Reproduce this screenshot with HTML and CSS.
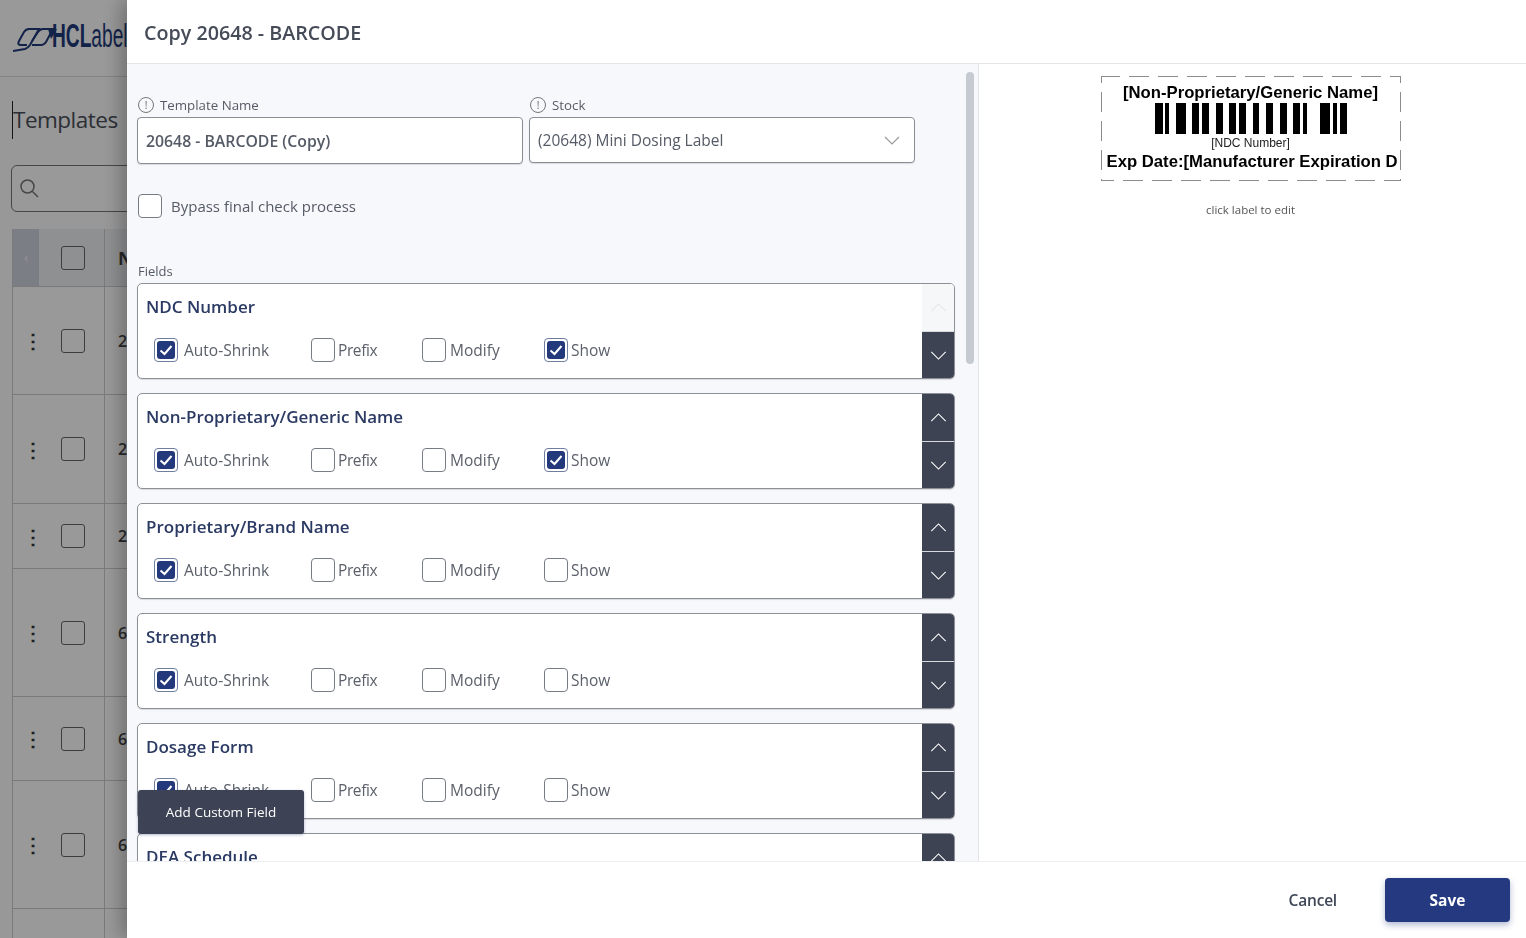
FILE: index.html
```html
<!DOCTYPE html>
<html lang="en">
<head>
<meta charset="utf-8">
<title>Copy 20648 - BARCODE</title>
<link rel="stylesheet" href="styles.css">
</head>
<body>
<div class="page">
  <header class="topbar">
    <svg class="logo-mark" width="44" height="25" viewBox="0 0 44 25" fill="none" stroke="#1f3a7a" stroke-width="2">
      <path d="M0 24L12 22Q15 21 17 18L26 2H16Q13 2 11 5L6 14Q4 18 8 18H14"/>
      <path d="M19 18H28Q31 18 33 15L40 2H30Q27 2 25 5L19 14"/>
      <path d="M35 2H44L38 12Z" fill="#1f3a7a" stroke="none"/>
    </svg>
    <span class="logo-text"><b>HCL</b>abels</span>
  </header>
  <h1 class="page-title">Templates</h1>
  <div class="search">
    <svg width="22" height="22" viewBox="0 0 22 22" fill="none" stroke="#777" stroke-width="1.5"><circle cx="9.500" cy="9.500" r="6.500"/><path d="M14.500 14.500L20 20"/></svg>
  </div>
  <div class="table">
    <div class="row head"><div class="toggle">‹</div><div class="sel"><span class="box"></span></div><div class="cell">Name</div></div>
    <div class="row h108"><div class="dots">⋮</div><div class="sel"><span class="box"></span></div><div class="cell">20648</div></div>
    <div class="row h109"><div class="dots">⋮</div><div class="sel"><span class="box"></span></div><div class="cell">20649</div></div>
    <div class="row h65"><div class="dots">⋮</div><div class="sel"><span class="box"></span></div><div class="cell">20650</div></div>
    <div class="row h128"><div class="dots">⋮</div><div class="sel"><span class="box"></span></div><div class="cell">60001</div></div>
    <div class="row h84"><div class="dots">⋮</div><div class="sel"><span class="box"></span></div><div class="cell">60002</div></div>
    <div class="row h128"><div class="dots">⋮</div><div class="sel"><span class="box"></span></div><div class="cell">60003</div></div>
    <div class="row h65"><div class="dots"></div><div class="sel"></div></div>
  </div>
</div>

<div class="scrim"></div>

<aside class="drawer">
  <header class="drawer-head">Copy 20648 - BARCODE</header>
  <div class="drawer-body">
    <section class="form-pane">
      <div class="top-fields">
        <div class="field name-field">
          <label class="field-label"><span class="info">!</span>Template Name</label>
          <div class="input strong">20648 - BARCODE (Copy)</div>
        </div>
        <div class="field stock-field">
          <label class="field-label"><span class="info">!</span>Stock</label>
          <div class="input select">(20648) Mini Dosing Label
            <svg width="16" height="9" viewBox="0 0 16 9" fill="none" stroke="#999" stroke-width="1.2"><path d="M1 1L8 8L15 1"/></svg>
          </div>
        </div>
      </div>
      <div class="bypass"><span class="check"></span>Bypass final check process</div>
      <div class="fields-label">Fields</div>
      <div class="cards">
        <article class="card">
          <div class="card-main">
            <h2>NDC Number</h2>
            <div class="opts">
              <div class="opt o1"><span class="check on"><svg viewBox="0 0 18 18"><path d="M3.500 9.500L7.500 13L14.500 5"/></svg></span>Auto-Shrink</div>
              <div class="opt o2"><span class="check"></span>Prefix</div>
              <div class="opt o3"><span class="check"></span>Modify</div>
              <div class="opt o4"><span class="check on"><svg viewBox="0 0 18 18"><path d="M3.500 9.500L7.500 13L14.500 5"/></svg></span>Show</div>
            </div>
          </div>
          <div class="arrows">
            <button class="arrow off"><svg viewBox="0 0 18 10"><path d="M1 9L9 1L17 9"/></svg></button>
            <button class="arrow"><svg viewBox="0 0 18 10"><path d="M1 1L9 9L17 1"/></svg></button>
          </div>
        </article>
        <article class="card">
          <div class="card-main">
            <h2>Non-Proprietary/Generic Name</h2>
            <div class="opts">
              <div class="opt o1"><span class="check on"><svg viewBox="0 0 18 18"><path d="M3.500 9.500L7.500 13L14.500 5"/></svg></span>Auto-Shrink</div>
              <div class="opt o2"><span class="check"></span>Prefix</div>
              <div class="opt o3"><span class="check"></span>Modify</div>
              <div class="opt o4"><span class="check on"><svg viewBox="0 0 18 18"><path d="M3.500 9.500L7.500 13L14.500 5"/></svg></span>Show</div>
            </div>
          </div>
          <div class="arrows">
            <button class="arrow"><svg viewBox="0 0 18 10"><path d="M1 9L9 1L17 9"/></svg></button>
            <button class="arrow"><svg viewBox="0 0 18 10"><path d="M1 1L9 9L17 1"/></svg></button>
          </div>
        </article>
        <article class="card">
          <div class="card-main">
            <h2>Proprietary/Brand Name</h2>
            <div class="opts">
              <div class="opt o1"><span class="check on"><svg viewBox="0 0 18 18"><path d="M3.500 9.500L7.500 13L14.500 5"/></svg></span>Auto-Shrink</div>
              <div class="opt o2"><span class="check"></span>Prefix</div>
              <div class="opt o3"><span class="check"></span>Modify</div>
              <div class="opt o4"><span class="check"></span>Show</div>
            </div>
          </div>
          <div class="arrows">
            <button class="arrow"><svg viewBox="0 0 18 10"><path d="M1 9L9 1L17 9"/></svg></button>
            <button class="arrow"><svg viewBox="0 0 18 10"><path d="M1 1L9 9L17 1"/></svg></button>
          </div>
        </article>
        <article class="card">
          <div class="card-main">
            <h2>Strength</h2>
            <div class="opts">
              <div class="opt o1"><span class="check on"><svg viewBox="0 0 18 18"><path d="M3.500 9.500L7.500 13L14.500 5"/></svg></span>Auto-Shrink</div>
              <div class="opt o2"><span class="check"></span>Prefix</div>
              <div class="opt o3"><span class="check"></span>Modify</div>
              <div class="opt o4"><span class="check"></span>Show</div>
            </div>
          </div>
          <div class="arrows">
            <button class="arrow"><svg viewBox="0 0 18 10"><path d="M1 9L9 1L17 9"/></svg></button>
            <button class="arrow"><svg viewBox="0 0 18 10"><path d="M1 1L9 9L17 1"/></svg></button>
          </div>
        </article>
        <article class="card">
          <div class="card-main">
            <h2>Dosage Form</h2>
            <div class="opts">
              <div class="opt o1"><span class="check on"><svg viewBox="0 0 18 18"><path d="M3.500 9.500L7.500 13L14.500 5"/></svg></span>Auto-Shrink</div>
              <div class="opt o2"><span class="check"></span>Prefix</div>
              <div class="opt o3"><span class="check"></span>Modify</div>
              <div class="opt o4"><span class="check"></span>Show</div>
            </div>
          </div>
          <div class="arrows">
            <button class="arrow"><svg viewBox="0 0 18 10"><path d="M1 9L9 1L17 9"/></svg></button>
            <button class="arrow"><svg viewBox="0 0 18 10"><path d="M1 1L9 9L17 1"/></svg></button>
          </div>
        </article>
        <article class="card">
          <div class="card-main">
            <h2>DEA Schedule</h2>
          </div>
          <div class="arrows">
            <button class="arrow"><svg viewBox="0 0 18 10"><path d="M1 9L9 1L17 9"/></svg></button>
            <button class="arrow"><svg viewBox="0 0 18 10"><path d="M1 1L9 9L17 1"/></svg></button>
          </div>
        </article>
      </div>
      <button class="add-field">Add Custom Field</button>
      <div class="scrollbar"></div>
    </section>
    <section class="preview-pane">
      <div class="label">
        <div class="l-name">[Non-Proprietary/Generic Name]</div>
        <svg class="barcode" width="192" height="31" viewBox="0 0 192 31" fill="#000">
          <rect x="0" width="8" height="31"/><rect x="10" width="4" height="31"/><rect x="21" width="10" height="31"/><rect x="37" width="7" height="31"/><rect x="47" width="7" height="31"/><rect x="61" width="7" height="31"/><rect x="74" width="7" height="31"/><rect x="84" width="7" height="31"/><rect x="98" width="6" height="31"/><rect x="111" width="7" height="31"/><rect x="125" width="7" height="31"/><rect x="138" width="7" height="31"/><rect x="148" width="4" height="31"/><rect x="165" width="10" height="31"/><rect x="178" width="4" height="31"/><rect x="185" width="7" height="31"/>
        </svg>
        <div class="l-ndc">[NDC Number]</div>
        <div class="l-exp">Exp Date:[Manufacturer Expiration Date]</div>
      </div>
      <div class="hint">click label to edit</div>
    </section>
  </div>
  <footer class="drawer-foot">
    <button class="cancel">Cancel</button>
    <button class="save">Save</button>
  </footer>
</aside>
</body>
</html>
```

FILE: styles.css
```css
* { box-sizing: border-box; }
html, body { margin: 0; height: 100%; overflow: hidden; }
body { font-family: "Open Sans", "Noto Sans", sans-serif; color: #555; background: #fff; }

.page { height: 938px; overflow: hidden; padding: 0 0 0 12px; background: #fdfdfd; }
.topbar { height: 77px; margin-left: -12px; padding: 0 0 4px 13px; background: #fff; border-bottom: 1px solid #ddd; display: flex; align-items: center; white-space: nowrap; }
.logo-mark { flex: none; margin: 7px -5px 0 0; }
.logo-text { font: 400 33px "Liberation Sans", sans-serif; color: #1f3a7a; transform: scaleX(.58); transform-origin: left; }
.logo-text b { font-weight: 700; }
.page-title { margin: 24px 0 0; font-weight: 400; font-size: 22.500px; letter-spacing: -.5px; line-height: 38px; color: #4a4f59; border-left: 1px solid #222; }
.search { margin: 26px 0 0 -1px; width: 300px; height: 47px; border: 1px solid #777; border-radius: 6px; background: #fff; padding: 11px 6px; }
.table { margin-top: 17px; border-left: 1px solid #ccc; }
.row { display: flex; align-items: center; background: #fff; border-bottom: 1px solid #ccc; }
.head { height: 58px; background: #eef0f3; }
.h108 { height: 108px; } .h109 { height: 109px; } .h65 { height: 65px; } .h128 { height: 128px; } .h84 { height: 84px; }
.toggle { width: 26px; height: 100%; background: #cdd2dc; color: #fff; text-align: center; line-height: 58px; font-size: 12px; }
.dots { width: 40px; text-align: center; font-size: 20px; font-weight: 700; color: #333; }
.sel { width: 52px; height: 100%; border-right: 1px solid #ccc; display: flex; align-items: center; padding-left: 8px; }
.head .sel { width: 66px; padding-left: 22px; }
.box { width: 24px; height: 24px; border: 1px solid #666; border-radius: 3px; display: block; }
.cell { padding-left: 13px; font-size: 16px; font-weight: 600; color: #444; white-space: nowrap; }
.head .cell { font-size: 18px; font-weight: 700; }

.scrim { position: fixed; inset: 0; background: rgba(0,0,0,.4); }

.drawer { position: fixed; top: 0; right: 0; bottom: 0; left: 127px; background: #fff; display: flex; flex-direction: column; box-shadow: -6px 0 18px rgba(0,0,0,.28); }
.drawer-head { height: 64px; flex: none; padding: 2px 17px 0; display: flex; align-items: center; font-size: 19.700px; font-weight: 600; color: #454b57; border-bottom: 1px solid #e3e5e8; }
.drawer-body { flex: 1; min-height: 0; display: flex; }
.form-pane { position: relative; width: 852px; flex: none; overflow: hidden; background: #f7f8fb; border-right: 1px solid #e3e5e8; padding: 31px 0 0 10px; }

.top-fields { display: flex; gap: 6px; }
.name-field { width: 386px; }
.stock-field { width: 386px; }
.field-label { display: flex; align-items: center; height: 21px; padding-bottom: 2px; font-size: 13.300px; color: #555b66; }
.info { width: 16px; height: 16px; margin-left: 1px; margin-right: 6px; border: 1px solid #777; border-radius: 50%; display: flex; align-items: center; justify-content: center; font-size: 10px; line-height: 1; color: #666; }
.input { height: 47px; margin-top: 1px; background: #fff; border: 1px solid #8a8d94; border-radius: 4px; box-shadow: 0 1px 1px rgba(0,0,0,.12); padding: 0 8px; display: flex; align-items: center; justify-content: space-between; font-size: 15.500px; color: #555b66; }
.strong { font-weight: 600; font-size: 15.800px; }
.select { height: 46px; padding-right: 14px; }

.bypass { margin-top: 30px; margin-left: 1px; display: flex; align-items: center; gap: 9px; font-size: 15px; color: #555b66; }
.check { width: 24px; height: 24px; flex: none; background: #fff; border: 1px solid #777c85; border-radius: 4px; display: flex; align-items: center; justify-content: center; }
.check.on { background: #fff; border-color: #6f7e9e; }
.check.on svg { background: #24397c; border-radius: 3px; }
.check svg { width: 18px; height: 18px; fill: none; stroke: #fff; stroke-width: 2; }

.fields-label { margin-top: 43px; margin-left: 1px; height: 22px; line-height: 20px; font-size: 13px; color: #555b66; }
.cards { display: flex; flex-direction: column; gap: 14px; width: 818px; }
.card { flex: none; height: 96px; display: flex; background: #fff; border: 1px solid #8d9096; border-radius: 5px; box-shadow: 0 1px 1px rgba(0,0,0,.12); overflow: hidden; }
.card-main { flex: 1; padding: 10px 8px 0; min-width: 0; }
.card h2 { margin: 0; font-size: 17px; line-height: 26px; font-weight: 600; color: #2b3a63; }
.opts { display: flex; margin-top: 18px; padding-left: 8px; font-size: 15.500px; color: #5b606a; }
.opt { display: flex; align-items: center; white-space: nowrap; }
.o1 { width: 157px; gap: 6px; }
.o2 { width: 111px; gap: 3px; letter-spacing: -.4px; }
.o3 { width: 122px; gap: 4px; }
.o4 { gap: 3px; }

.arrows { width: 32px; flex: none; display: flex; flex-direction: column; }
.arrow { height: 48px; padding: 1px 0 0; border: 0; background: #3d4352; display: flex; align-items: center; justify-content: center; }
.arrow + .arrow { border-top: 1px solid #d8dade; }
.arrow svg { width: 17px; height: 9px; fill: none; stroke: #fff; stroke-width: 1.2; }
.arrow.off { background: #f6f7f8; }
.arrow.off svg { stroke: #e4e6e8; }

.add-field { position: absolute; left: 11px; top: 726px; width: 166px; height: 44px; border: 0; border-radius: 3px; background: #3d4354; color: #fff; font: 400 13.500px "Open Sans", sans-serif; box-shadow: 0 1px 3px rgba(40,60,120,.35); }
.scrollbar { position: absolute; left: 839px; top: 8px; width: 8px; height: 292px; border-radius: 4px; background: #c6cbd2; }

.preview-pane { flex: 1; display: flex; flex-direction: column; align-items: center; padding-right: 4px; }
.label { width: 300px; height: 105px; margin-top: 12px; overflow: hidden; text-align: center; font-family: "Liberation Sans", sans-serif; color: #000;
  background:
    repeating-linear-gradient(90deg, #8c8c8c -1px 19px, transparent 19px 28px) top left / 100% 1px no-repeat,
    repeating-linear-gradient(90deg, #8c8c8c -7px 13px, transparent 13px 22px) bottom left / 100% 1px no-repeat,
    repeating-linear-gradient(180deg, #8c8c8c -13px 7px, transparent 7px 16px) top left / 1px 100% no-repeat,
    repeating-linear-gradient(180deg, #8c8c8c -13px 7px, transparent 7px 16px) top right / 1px 100% no-repeat;
}
.l-name { font-size: 16.700px; font-weight: 700; line-height: 18px; margin-top: 8px; white-space: nowrap; }
.barcode { display: block; margin: 1px auto 0; }
.l-ndc { font-size: 12px; line-height: 14px; margin-top: 2px; color: #222; }
.l-exp { font-size: 16.700px; font-weight: 700; line-height: 18px; margin: 3px 3px 0 0; overflow: hidden; white-space: nowrap; text-align: left; padding-left: 6px; }
.hint { margin-top: 21px; font-size: 11.500px; line-height: 15px; color: #555; }

.drawer-foot { height: 77px; flex: none; border-top: 1px solid #eceef0; display: flex; align-items: flex-start; justify-content: flex-end; padding: 16px 16px 0 0; gap: 48px; }
.cancel { height: 44px; border: 0; background: none; padding: 0; font: 600 15.500px "Open Sans", sans-serif; letter-spacing: -.2px; color: #3f4657; }
.save { width: 125px; height: 44px; border: 0; border-radius: 4px; background: #24397f; color: #fff; font: 700 15.500px "Open Sans", sans-serif; box-shadow: 0 3px 6px rgba(36,57,127,.35); }
```
